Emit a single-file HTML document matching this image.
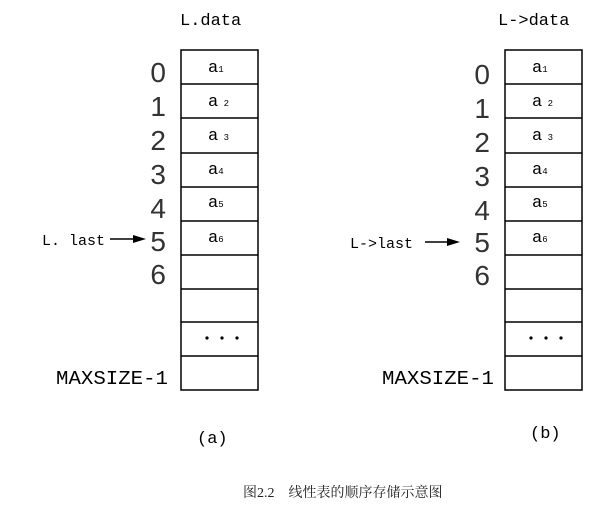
<!DOCTYPE html>
<html><head><meta charset="utf-8"><style>
html,body{margin:0;padding:0;background:#fff;width:606px;height:516px;overflow:hidden}
svg{display:block}
.m{font-family:"Liberation Mono",monospace;fill:#000}
.n{font-family:"Liberation Sans",sans-serif;fill:#333}
</style></head><body>
<svg width="606" height="516" viewBox="0 0 606 516">
<g stroke="#000" stroke-width="1.5" fill="none">
<rect x="181" y="50" width="77" height="340"/>
<line x1="181" y1="84" x2="258" y2="84"/><line x1="181" y1="118" x2="258" y2="118"/>
<line x1="181" y1="153" x2="258" y2="153"/><line x1="181" y1="187" x2="258" y2="187"/>
<line x1="181" y1="221" x2="258" y2="221"/><line x1="181" y1="255" x2="258" y2="255"/>
<line x1="181" y1="289" x2="258" y2="289"/><line x1="181" y1="322" x2="258" y2="322"/>
<line x1="181" y1="356" x2="258" y2="356"/>
<rect x="505" y="50" width="77" height="340"/>
<line x1="505" y1="84" x2="582" y2="84"/><line x1="505" y1="118" x2="582" y2="118"/>
<line x1="505" y1="153" x2="582" y2="153"/><line x1="505" y1="187" x2="582" y2="187"/>
<line x1="505" y1="221" x2="582" y2="221"/><line x1="505" y1="255" x2="582" y2="255"/>
<line x1="505" y1="289" x2="582" y2="289"/><line x1="505" y1="322" x2="582" y2="322"/>
<line x1="505" y1="356" x2="582" y2="356"/>
<line x1="110" y1="239" x2="140" y2="239"/>
<line x1="425" y1="242" x2="450" y2="242"/>
</g>
<polygon points="133,235 146,239 133,243" fill="#000"/>
<polygon points="447,238 460,242 447,246" fill="#000"/>
<g fill="#000">
<circle cx="207" cy="338" r="1.6"/><circle cx="222" cy="338" r="1.6"/><circle cx="237" cy="338" r="1.6"/>
<circle cx="531" cy="338" r="1.6"/><circle cx="546" cy="338" r="1.6"/><circle cx="561" cy="338" r="1.6"/>
</g>
<g class="m" font-size="17">
<text x="180" y="25">L.data</text>
<text x="498" y="25">L-&gt;data</text>
<text x="42" y="245" font-size="15">L. last</text>
<text x="350" y="248" font-size="15">L-&gt;last</text>
<text x="56" y="384" font-size="19" textLength="112" lengthAdjust="spacingAndGlyphs">MAXSIZE-1</text>
<text x="382" y="384" font-size="19" textLength="112" lengthAdjust="spacingAndGlyphs">MAXSIZE-1</text>
<text x="197" y="443">(a)</text>
<text x="530" y="438">(b)</text>
</g>
<g class="m" font-size="17">
<text x="208" y="72">a<tspan font-size="9">1</tspan></text>
<text x="208" y="106">a<tspan font-size="9"> 2</tspan></text>
<text x="208" y="140">a<tspan font-size="9"> 3</tspan></text>
<text x="208" y="174">a<tspan font-size="9">4</tspan></text>
<text x="208" y="207">a<tspan font-size="9">5</tspan></text>
<text x="208" y="242">a<tspan font-size="9">6</tspan></text>
<text x="532" y="72">a<tspan font-size="9">1</tspan></text>
<text x="532" y="106">a<tspan font-size="9"> 2</tspan></text>
<text x="532" y="140">a<tspan font-size="9"> 3</tspan></text>
<text x="532" y="174">a<tspan font-size="9">4</tspan></text>
<text x="532" y="207">a<tspan font-size="9">5</tspan></text>
<text x="532" y="242">a<tspan font-size="9">6</tspan></text>
</g>
<g class="n" font-size="28" text-anchor="end">
<text x="166" y="82">0</text><text x="166" y="116">1</text><text x="166" y="150">2</text>
<text x="166" y="184">3</text><text x="166" y="218">4</text><text x="166" y="251">5</text>
<text x="166" y="284">6</text>
<text x="490" y="84">0</text><text x="490" y="118">1</text><text x="490" y="152">2</text>
<text x="490" y="186">3</text><text x="490" y="220">4</text><text x="490" y="252">5</text>
<text x="490" y="285">6</text>
</g>
<text x="243" y="497" font-family="'Liberation Serif','Noto Serif CJK SC',serif" font-size="14" fill="#222">图2.2&#160;&#160;&#160;&#160;线性表的顺序存储示意图</text>
</svg>
</body></html>
